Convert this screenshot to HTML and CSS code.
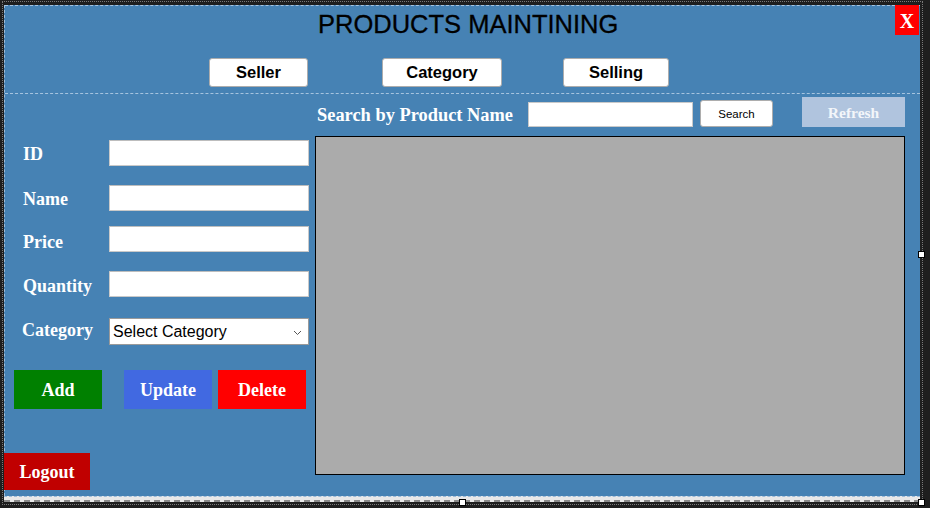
FILE: index.html
```html
<!DOCTYPE html>
<html>
<head>
<meta charset="utf-8">
<link rel="stylesheet" href="styles.css">
</head>
<body>
<div class="form">
  <div class="top-panel">
    <div class="title">PRODUCTS MAINTINING</div>
    <div class="close">X</div>
    <div class="nav">
      <button class="nav-btn seller">Seller</button>
      <button class="nav-btn category">Category</button>
      <button class="nav-btn selling">Selling</button>
    </div>
  </div>
  <div class="main">
    <div class="left">
      <div class="field f-id"><span class="lbl">ID</span><input class="txt" type="text"></div>
      <div class="field f-name"><span class="lbl">Name</span><input class="txt" type="text"></div>
      <div class="field f-price"><span class="lbl lbl-price">Price</span><input class="txt" type="text"></div>
      <div class="field f-qty"><span class="lbl lbl-qty">Quantity</span><input class="txt" type="text"></div>
      <div class="field f-cat"><span class="lbl lbl-cat">Category</span>
        <div class="combo"><span>Select Category</span>
          <svg class="chev" width="9" height="6" viewBox="0 0 9 6"><path d="M1 1 L4.5 4.5 L8 1" fill="none" stroke="#555" stroke-width="1"/></svg>
        </div>
      </div>
      <div class="actions">
        <div class="act add">Add</div>
        <div class="act update">Update</div>
        <div class="act delete">Delete</div>
      </div>
      <div class="act logout">Logout</div>
    </div>
    <div class="right">
      <div class="search-row">
        <span class="search-lbl">Search by Product Name</span>
        <input class="search-txt" type="text">
        <button class="search-btn">Search</button>
        <div class="refresh">Refresh</div>
      </div>
      <div class="grid"></div>
    </div>
  </div>
</div>
<div class="strip"></div>
<div class="sel-frame"></div>
<div class="handle h-right"></div>
<div class="handle h-bottom"></div>
<div class="handle h-corner"></div>
</body>
</html>
```
FILE: styles.css
```css
html, body {
  margin: 0;
  padding: 0;
}
body {
  width: 930px;
  height: 508px;
  overflow: hidden;
  background: #1e1e1e;
  position: relative;
  padding: 5px 0 0 4px;
  box-sizing: border-box;
  font-family: "Liberation Sans", Arial, sans-serif;
}
.form {
  width: 916px;
  height: 491px;
  background: #4682b4;
  position: relative;
  box-sizing: border-box;
  border-left: 1px dashed #9dbcd9;
}
.top-panel {
  height: 89px;
  box-sizing: border-box;
  border-top: 1px dashed #a6c4df;
  border-bottom: 1px dashed #a6c4df;
  position: relative;
}
.title {
  margin-top: 4px;
  padding-left: 313px;
  font-size: 25.5px;
  line-height: 29px;
  color: #000;
  white-space: nowrap;
  -webkit-text-stroke: 0.3px #000;
}
.close {
  position: absolute;
  top: -1px;
  right: 1px;
  width: 24px;
  height: 30px;
  background: #ff0000;
  color: #fff;
  font-family: "Liberation Serif", serif;
  font-weight: bold;
  font-size: 20px;
  line-height: 32px;
  text-align: center;
}
.nav {
  display: flex;
  margin-top: 19px;
  padding-left: 204px;
}
.nav-btn {
  height: 29px;
  background: #fff;
  border: 1px solid #adadad;
  border-radius: 3px;
  font-family: "Liberation Sans", Arial, sans-serif;
  font-weight: bold;
  font-size: 16.5px;
  color: #000;
  padding: 0;
}
.seller { width: 99px; }
.category { width: 120px; margin-left: 74px; }
.selling { width: 106px; margin-left: 61px; }

.main {
  display: flex;
}
.left {
  width: 310px;
  padding-top: 46px;
  display: flex;
  flex-direction: column;
}
.field {
  display: flex;
  align-items: center;
  height: 26px;
  padding-left: 18px;
}
.f-name { margin-top: 19px; }
.f-price { margin-top: 15px; }
.f-qty { margin-top: 19px; }
.f-cat { margin-top: 21px; height: 27px; }
.lbl {
  width: 86px;
  color: #fff;
  font-family: "Liberation Serif", serif;
  font-weight: bold;
  font-size: 18px;
  line-height: 20px;
  padding-top: 1px;
}
.lbl-price { padding-top: 5px; }
.lbl-qty { padding-top: 3px; }
.lbl-cat { margin-left: -1px; width: 87px; padding-top: 0; margin-top: -3px; }
.txt {
  width: 200px;
  height: 26px;
  box-sizing: border-box;
  border: 1px solid #c9c9c9;
  border-top-color: #bdbdbd;
  background: #fff;
  margin: 0;
  padding: 0 3px;
  outline: none;
}
.combo {
  width: 200px;
  height: 27px;
  box-sizing: border-box;
  border: 1px solid #9a9a9a;
  background: #fff;
  display: flex;
  align-items: center;
  justify-content: space-between;
  padding: 0 6px 0 3px;
  font-family: "Liberation Sans", Arial, sans-serif;
  font-size: 16px;
  color: #000;
}
.chev { margin-top: 2px; }
.actions {
  display: flex;
  margin-top: 25px;
  padding-left: 9px;
}
.act {
  height: 39px;
  width: 88px;
  color: #fff;
  font-family: "Liberation Serif", serif;
  font-weight: bold;
  font-size: 18px;
  line-height: 41px;
  text-align: center;
}
.add { background: #008000; }
.update { background: #4169e1; margin-left: 22px; }
.delete { background: #ff0000; margin-left: 6px; }
.logout {
  background: #c00000;
  width: 86px;
  height: 37px;
  line-height: 39px;
  margin-top: 44px;
  margin-left: -1px;
}
.right {
  width: 590px;
}
.search-row {
  display: flex;
  align-items: flex-end;
  height: 30px;
  margin-top: 3px;
}
.search-lbl {
  width: 213px;
  padding-left: 2px;
  box-sizing: border-box;
  color: #fff;
  font-family: "Liberation Serif", serif;
  font-weight: bold;
  font-size: 18.4px;
  line-height: 20px;
  padding-bottom: 2px;
  white-space: nowrap;
}
.search-txt {
  width: 165px;
  height: 25px;
  box-sizing: border-box;
  border: 1px solid #c9c9c9;
  background: #fff;
  margin: 0;
  outline: none;
}
.search-btn {
  width: 73px;
  height: 27px;
  margin-left: 7px;
  background: #fff;
  border: 1px solid #adadad;
  border-radius: 3px;
  font-family: "Liberation Sans", Arial, sans-serif;
  font-size: 11.5px;
  color: #000;
  padding: 0;
}
.refresh {
  width: 103px;
  height: 30px;
  margin-left: 29px;
  background: #b0c4de;
  color: #f3f6fa;
  font-family: "Liberation Serif", serif;
  font-weight: bold;
  font-size: 15.5px;
  line-height: 32px;
  text-align: center;
}
.grid {
  margin-top: 9px;
  width: 590px;
  height: 339px;
  box-sizing: border-box;
  border: 1px solid #000;
  background: #ababab;
}
.strip {
  width: 916px;
  height: 6px;
  box-sizing: border-box;
  background: #e9e9e9;
  border-top: 1px dashed #9dbcd9;
  border-bottom: 2px dashed #8c8c8c;
}
.sel-frame {
  position: absolute;
  left: 2px;
  top: 1px;
  width: 919px;
  height: 502px;
  border: 1px dotted #7a7a7a;
  pointer-events: none;
}
.handle {
  position: absolute;
  width: 5px;
  height: 5px;
  background: #fff;
  border: 1px solid #000;
}
.h-right { left: 918px; top: 251px; }
.h-bottom { left: 459px; top: 499px; }
.h-corner { left: 918px; top: 499px; }
```
